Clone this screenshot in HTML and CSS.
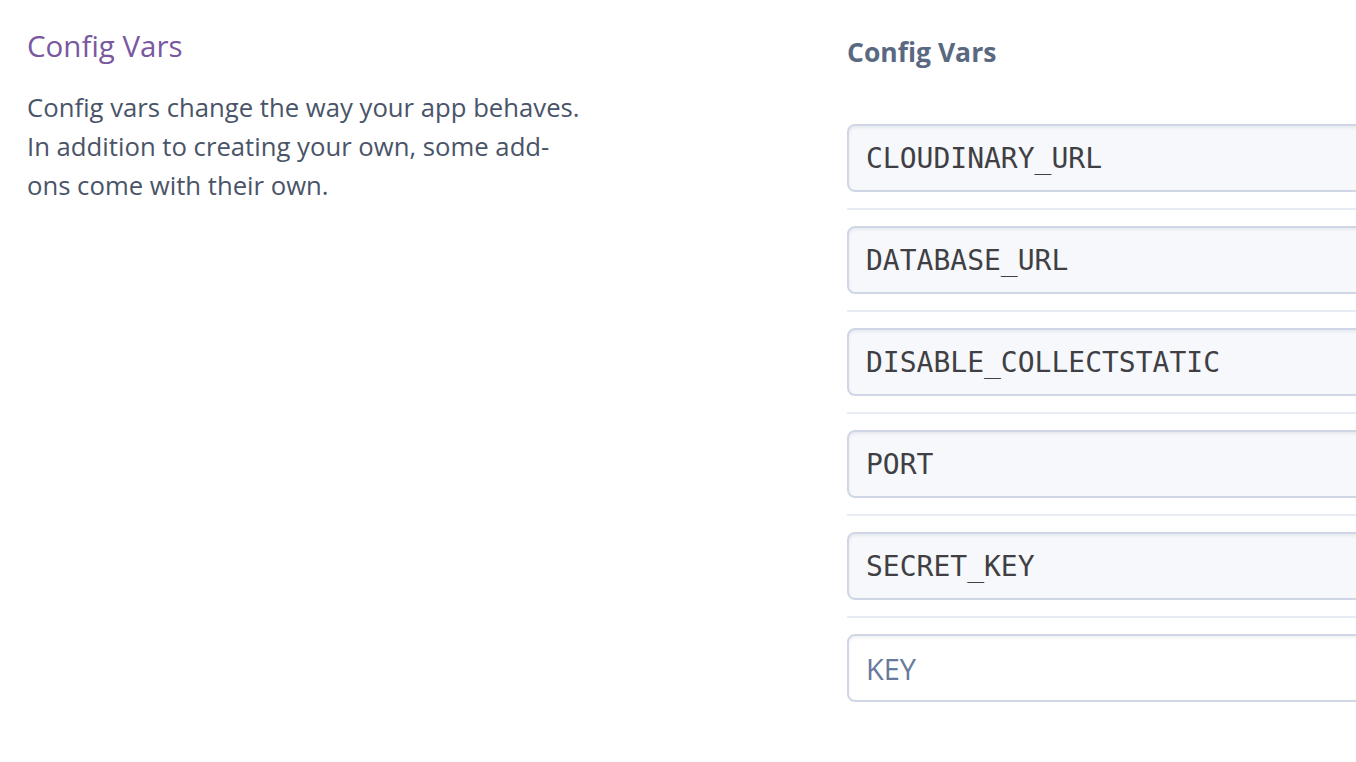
FILE: index.html
```html
<!DOCTYPE html>
<html>
<head>
<meta charset="utf-8">
<link rel="stylesheet" href="styles.css">
</head>
<body>
<div class="page">
  <section class="intro">
    <h2 class="intro-title">Config Vars</h2>
    <p class="intro-text">Config vars change the way your app behaves. In addition to creating your own, some add-ons come with their own.</p>
  </section>
  <section class="vars">
    <h3 class="vars-title">Config Vars</h3>
    <div class="var-list">
      <div class="var-row"><input class="var-input" value="CLOUDINARY_URL"></div>
      <div class="var-row"><input class="var-input" value="DATABASE_URL"></div>
      <div class="var-row"><input class="var-input" value="DISABLE_COLLECTSTATIC"></div>
      <div class="var-row"><input class="var-input" value="PORT"></div>
      <div class="var-row"><input class="var-input" value="SECRET_KEY"></div>
      <div class="var-row"><input class="var-input new" placeholder="KEY"></div>
    </div>
  </section>
</div>
</body>
</html>
```
FILE: styles.css
```css
html, body {
  margin: 0;
  padding: 0;
  background: #ffffff;
  overflow: hidden;
}
body {
  font-family: "Open Sans", Lato, sans-serif;
}
.page {
  display: flex;
  padding-left: 27px;
}
.intro {
  width: 562px;
  flex: none;
}
.intro-title {
  margin: 27px 0 0;
  font-size: 29.5px;
  line-height: 38px;
  font-weight: 400;
  color: #79589f;
}
.intro-text {
  margin: 23px 0 0;
  font-size: 25.7px;
  line-height: 39px;
  color: #4a5468;
}
.vars {
  margin-left: 258px;
  flex: 1;
  overflow: hidden;
}
.vars-title {
  margin: 34px 0 0;
  font-size: 26.5px;
  line-height: 36px;
  font-weight: 700;
  color: #596981;
}
.var-list {
  margin-top: 54px;
  display: flex;
  flex-direction: column;
}
.var-row {
  padding-bottom: 16px;
  margin-bottom: 16px;
  border-bottom: 2px solid #e7ebf3;
  margin-right: -20px;
}
.var-row:last-child {
  border-bottom: none;
}
.var-input {
  display: block;
  box-sizing: border-box;
  width: 100%;
  height: 68px;
  margin: 0;
  padding: 0 17px;
  border: 2px solid #cfd7e6;
  border-radius: 8px;
  background: #f7f8fb;
  box-shadow: inset 0 2px 3px rgba(89, 105, 129, 0.1);
  font-family: "DejaVu Sans Mono", monospace;
  font-size: 28px;
  color: #3f3f44;
  outline: none;
}
.var-input.new {
  background: #ffffff;
  font-family: "Open Sans", sans-serif;
  font-size: 29px;
}
.var-input.new::placeholder {
  color: #687a9b;
  opacity: 1;
}
```
